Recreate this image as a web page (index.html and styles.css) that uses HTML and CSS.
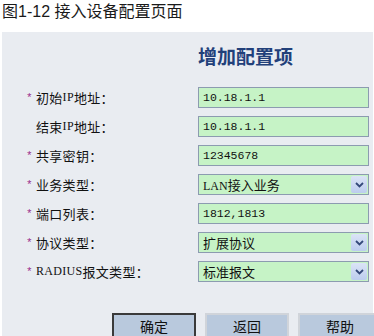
FILE: index.html
```html
<!DOCTYPE html>
<html lang="zh-CN">
<head>
    <meta charset="UTF-8">
    <title>接入设备配置页面</title>
    <link rel="stylesheet" href="styles.css">
</head>
<body>
    <div class="caption">图1-12 接入设备配置页面</div>
    <div class="panel">
        <h2 class="title">增加配置项</h2>
        <div class="form">
            <label class="field-label"><span class="req">*</span>初始<span class="lat">IP</span>地址：</label>
            <div class="field">10.18.1.1</div>

            <label class="field-label"><span class="req"></span>结束<span class="lat">IP</span>地址：</label>
            <div class="field">10.18.1.1</div>

            <label class="field-label"><span class="req">*</span>共享密钥：</label>
            <div class="field">12345678</div>

            <label class="field-label"><span class="req">*</span>业务类型：</label>
            <div class="field select"><span class="val"><span class="lat">LAN</span>接入业务</span><span class="arrow"><svg width="9" height="6" viewBox="0 0 9 6"><path d="M1 1 L4.5 4.5 L8 1" fill="none" stroke="#34497a" stroke-width="1.8"/></svg></span></div>

            <label class="field-label"><span class="req">*</span>端口列表：</label>
            <div class="field">1812,1813</div>

            <label class="field-label"><span class="req">*</span>协议类型：</label>
            <div class="field select"><span class="val">扩展协议</span><span class="arrow"><svg width="9" height="6" viewBox="0 0 9 6"><path d="M1 1 L4.5 4.5 L8 1" fill="none" stroke="#34497a" stroke-width="1.8"/></svg></span></div>

            <label class="field-label"><span class="req">*</span><span class="lat">RADIUS</span>报文类型：</label>
            <div class="field select"><span class="val">标准报文</span><span class="arrow"><svg width="9" height="6" viewBox="0 0 9 6"><path d="M1 1 L4.5 4.5 L8 1" fill="none" stroke="#34497a" stroke-width="1.8"/></svg></span></div>
        </div>
        <div class="buttons">
            <button class="btn default">确定</button>
            <button class="btn">返回</button>
            <button class="btn">帮助</button>
        </div>
    </div>
</body>
</html>
```

FILE: styles.css
```css
body {
    margin: 0;
    background: #ffffff;
    font-family: "Liberation Sans", "Noto Sans CJK SC", sans-serif;
    overflow: hidden;
    height: 336px;
}
.caption {
    height: 32px;
    padding-left: 2px;
    font-size: 16px;
    line-height: 24px;
    color: #1a1a1a;
    box-sizing: border-box;
}
.panel {
    margin: 0 1px 0 2px;
    height: 304px;
    background: #e9ecf1;
    box-sizing: border-box;
    padding-top: 12px;
}
.title {
    margin: 0 0 20px 196px;
    font-size: 19px;
    line-height: 23px;
    font-weight: bold;
    color: #22407a;
    font-family: "Noto Sans CJK SC", sans-serif;
}
.form {
    display: grid;
    grid-template-columns: 172px 171px;
    row-gap: 8px;
    padding-left: 24px;
}
.field-label {
    display: flex;
    align-items: center;
    height: 21px;
    font-size: 13px;
    letter-spacing: 0.3px;
    color: #111;
    font-family: "Noto Sans CJK SC", sans-serif;
}
.req {
    display: inline-block;
    width: 10px;
    color: #9a2c8c;
    font-size: 11px;
    font-family: "Liberation Mono", monospace;
}
.lat {
    font-family: "Liberation Serif", serif;
    font-size: 12px;
}
.field {
    height: 21px;
    box-sizing: border-box;
    border: 1px solid #8c9bb0;
    background: #c6f3c6;
    padding: 0 4px;
    font-family: "Liberation Mono", monospace;
    font-size: 11.5px;
    line-height: 19px;
    color: #111;
}
.select {
    display: flex;
    justify-content: space-between;
    padding-right: 1px;
    font-family: "Noto Sans CJK SC", sans-serif;
    font-size: 13px;
}
.arrow {
    width: 16px;
    height: 17px;
    margin-top: 1px;
    background: linear-gradient(#dbe4f6, #bccdee);
    border-radius: 2px;
    display: flex;
    align-items: center;
    justify-content: center;
}
.buttons {
    display: flex;
    gap: 9px;
    margin: 31px 0 0 110px;
}
.btn {
    flex: none;
    width: 84px;
    height: 26px;
    background: #b9c9dd;
    border: 2px solid #d0d4da;
    font-family: "Noto Sans CJK SC", sans-serif;
    font-size: 14px;
    color: #111;
    padding: 0;
}
.btn.default {
    border: 2px solid #3a3a3a;
}
```
